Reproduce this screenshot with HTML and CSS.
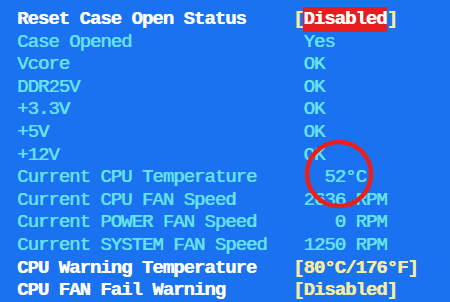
FILE: index.html
```html
<!DOCTYPE html>
<html>
<head>
<meta charset="utf-8">
<link rel="stylesheet" href="styles.css">
</head>
<body>
<div class="screen">
  <div class="rows">
    <div class="row hi"><span class="lbl">Reset Case Open Status</span><span class="val"><span class="br">[</span><span class="sel">Disabled</span><span class="br">]</span></span></div>
    <div class="row"><span class="lbl">Case Opened</span><span class="val"> Yes</span></div>
    <div class="row"><span class="lbl">Vcore</span><span class="val"> OK</span></div>
    <div class="row"><span class="lbl">DDR25V</span><span class="val"> OK</span></div>
    <div class="row"><span class="lbl">+3.3V</span><span class="val"> OK</span></div>
    <div class="row"><span class="lbl">+5V</span><span class="val"> OK</span></div>
    <div class="row"><span class="lbl">+12V</span><span class="val"> OK</span></div>
    <div class="row"><span class="lbl">Current CPU Temperature</span><span class="val">   52°C</span></div>
    <div class="row"><span class="lbl">Current CPU FAN Speed</span><span class="val"> 2636 RPM</span></div>
    <div class="row"><span class="lbl">Current POWER FAN Speed</span><span class="val">    0 RPM</span></div>
    <div class="row"><span class="lbl">Current SYSTEM FAN Speed</span><span class="val"> 1250 RPM</span></div>
    <div class="row hi"><span class="lbl">CPU Warning Temperature</span><span class="val yel">[80°C/176°F]</span></div>
    <div class="row hi"><span class="lbl">CPU FAN Fail Warning</span><span class="val yel">[Disabled]</span></div>
  </div>
  <svg class="ring" width="72" height="72" viewBox="0 0 72 72"><circle cx="35" cy="35" r="32" fill="none" stroke="#e8201c" stroke-width="4.5"/></svg>
</div>
</body>
</html>
```
FILE: styles.css
```css
html, body {
  margin: 0;
  padding: 0;
  background: #1a72f0;
}
.screen {
  position: relative;
  width: 450px;
  height: 302px;
  overflow: hidden;
  background: #1a72f0;
}
.rows {
  padding: 8px 0 0 17px;
  font-family: "Liberation Mono", "DejaVu Sans Mono", monospace;
  font-size: 19px;
  letter-spacing: -1px;
  line-height: 22.6px;
  color: #66e2ee;
  text-shadow: 0.6px 0 0 currentColor;
}
.row {
  display: flex;
  white-space: pre;
}
.lbl {
  width: 276px;
  flex: none;
}
.val {
  white-space: pre;
}
.hi {
  color: #ffffff;
  font-weight: bold;
  text-shadow: 0.4px 0 0 currentColor;
}
.br, .yel {
  color: #f6eca0;
}
.sel {
  background: #e41e1e;
  color: #ffffff;
  padding: 1px 0 2px;
}
.ring {
  position: absolute;
  left: 304px;
  top: 139px;
}
```
